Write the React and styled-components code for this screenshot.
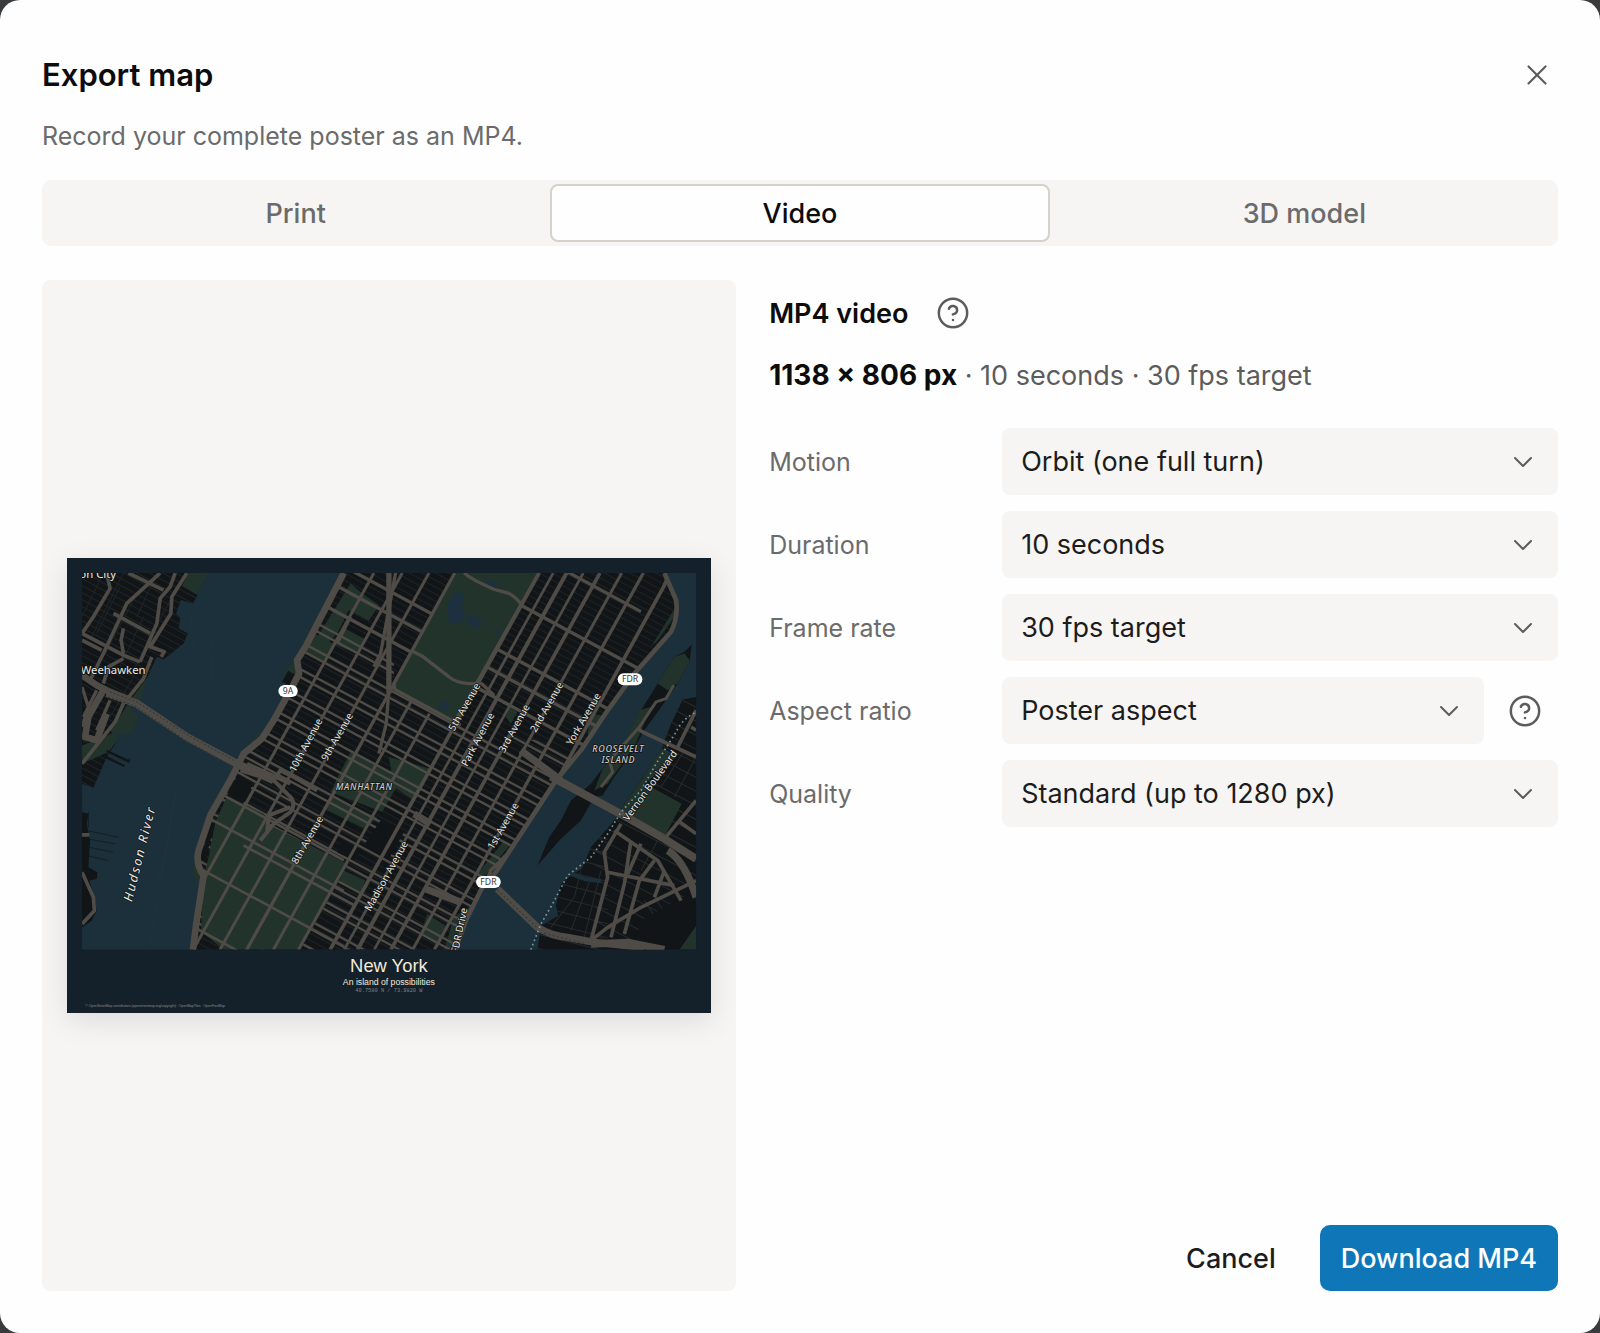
import React from 'react';
import styled, { createGlobalStyle } from 'styled-components';
import { X, ChevronDown, CircleHelp } from 'lucide-react';

const { useState } = React;

const GlobalStyle = createGlobalStyle`
  * { box-sizing: border-box; }
  body {
    margin: 0;
    background: #3a3b3c;
    font-family: Inter, 'Liberation Sans', sans-serif;
    color: #0c0c0c;
  }
  button, select { font: inherit; color: inherit; }
`;

const Dialog = styled.main`
  display: flex;
  flex-direction: column;
  min-height: 100vh;
  padding: 54px 42px 42px;
  border-radius: 20px;
  background: #fefefe;
`;

const Header = styled.header`
  display: flex;
  align-items: center;
  justify-content: space-between;
`;

const Title = styled.h1`
  margin: 0;
  font-size: 31px;
  font-weight: 600;
  line-height: 42px;
`;

const IconButton = styled.button`
  display: flex;
  align-items: center;
  justify-content: center;
  flex: none;
  width: ${(props) => props.$size}px;
  height: ${(props) => props.$size}px;
  padding: 0;
  border: 0;
  background: none;
  color: #5c5c5c;
  cursor: pointer;
`;

const Subtitle = styled.p`
  margin: 21px 0 25px;
  font-size: 25px;
  line-height: 38px;
  color: #6b6b6b;
`;

const Tabs = styled.div`
  display: grid;
  grid-template-columns: repeat(3, 1fr);
  gap: 5px;
  height: 66px;
  padding: 4px;
  border-radius: 9px;
  background: #f6f5f3;
`;

const Tab = styled.button`
  border: 2px solid ${(props) => (props.$active ? '#d3d3cb' : 'transparent')};
  border-radius: 8px;
  background: ${(props) => (props.$active ? '#fefefe' : 'transparent')};
  color: ${(props) => (props.$active ? '#0c0c0c' : '#6b6b6b')};
  font-size: 27px;
  font-weight: 500;
  cursor: pointer;
`;

const Body = styled.div`
  display: grid;
  grid-template-columns: 22fr 25fr;
  gap: 33px;
  flex: 1;
  margin-top: 34px;
`;

const Preview = styled.section`
  display: flex;
  align-items: center;
  padding: 25px;
  border-radius: 8px;
  background: #f6f5f3;
`;

const Poster = styled.svg`
  display: block;
  width: 100%;
  box-shadow: 0 8px 28px rgba(0, 0, 0, 0.1);
`;

const Settings = styled.section`
  display: flex;
  flex-direction: column;
`;

const HeadingRow = styled.div`
  display: flex;
  align-items: center;
  gap: 12px;
`;

const Heading = styled.h2`
  margin: 0;
  font-size: 27px;
  font-weight: 600;
`;

const Summary = styled.p`
  margin: 10px 0 33px;
  font-size: 27px;
  line-height: 38px;
  color: #5c5c5c;

  strong {
    color: #0c0c0c;
    font-size: 28px;
    font-weight: 700;
  }
`;

const Fields = styled.div`
  display: flex;
  flex-direction: column;
  gap: 16px;
`;

const Field = styled.div`
  display: flex;
  align-items: center;
  gap: 8px;
`;

const Label = styled.label`
  flex: none;
  width: 225px;
  font-size: 25px;
  color: #6b6b6b;
`;

const SelectBox = styled.div`
  display: grid;
  flex: 1;
  align-items: center;

  > * { grid-area: 1 / 1; }
  svg {
    justify-self: end;
    margin-right: 19px;
    color: #5c5c5c;
    pointer-events: none;
  }
`;

const Select = styled.select`
  width: 100%;
  height: 67px;
  padding: 0 60px 0 19px;
  border: 0;
  border-radius: 8px;
  background: #f6f5f3;
  color: #1c1c1c;
  font-size: 27px;
  appearance: none;
`;

const Actions = styled.footer`
  display: flex;
  justify-content: flex-end;
  gap: 23px;
  margin-top: auto;
`;

const Action = styled.button`
  height: 66px;
  padding: 0 21px;
  border: 0;
  border-radius: 10px;
  background: ${(props) => (props.$primary ? '#0f77b7' : 'transparent')};
  color: ${(props) => (props.$primary ? '#fff' : '#1c1c1c')};
  font-size: 27px;
  font-weight: 500;
  cursor: pointer;
`;

const fields = [
  { id: 'motion', label: 'Motion', options: ['Orbit (one full turn)', 'Still'] },
  { id: 'duration', label: 'Duration', options: ['10 seconds', '20 seconds'] },
  { id: 'rate', label: 'Frame rate', options: ['30 fps target', '60 fps target'] },
  { id: 'aspect', label: 'Aspect ratio', options: ['Poster aspect', 'Square'], help: true },
  { id: 'quality', label: 'Quality', options: ['Standard (up to 1280 px)', 'High (up to 1920 px)'] },
];

const road = '#4f4b46';
const land = '#111517';
const water = '#1c303b';
const park = '#21332b';

// x of each avenue where it meets the top edge of the map
const avenues = [
  [940, 9, 69], [1025, 9, 69], [1105, 9, 69], [1185, 10, 69], [1265, 9, 450], [1340, 9, 490],
  [1435, 11, 69], [1477, 8, 69], [1517, 12, 69], [1567, 8, 69], [1617, 11, 69], [1682, 9, 69], [1747, 10, 69],
];

// intercepts of the numbered streets, which run in close pairs through midtown
const midtown = [];
for (let d = -196; d < 930; d += 82) {
  midtown.push(d, d + 24);
}
const blocks = [];
for (let d = -1000; d < 1200; d += 21) {
  blocks.push(d);
}
const uptown = [-755, -580, -410, -340, -262];
const westside = [470, 562, 728, 913];

const street = (d, from, to) => `M${from} ${0.54 * from + d}L${to} ${0.54 * to + d}`;

const labels = [
  ['Weehawken', 62, 370, 0, 34, 'start'],
  ['on City', 58, 85, 0, 34, 'start'],
  ['10th Avenue', 737, 585, -62, 30],
  ['9th Avenue', 831, 560, -60, 30],
  ['5th Avenue', 1212, 471, -60, 30],
  ['Park Avenue', 1252, 568, -62, 30],
  ['3rd Avenue', 1361, 535, -61, 30],
  ['2nd Avenue', 1459, 471, -60, 30],
  ['York Avenue', 1569, 507, -60, 30],
  ['8th Avenue', 742, 869, -60, 30],
  ['Madison Avenue', 978, 977, -61, 30],
  ['1st Avenue', 1328, 827, -60, 30],
  ['Vernon Boulevard', 1768, 706, -54, 30],
  ['FDR Drive', 1197, 1140, -78, 30],
];

const shields = [
  ['9A', 683, 422, 58],
  ['FDR', 1707, 387, 74],
  ['FDR', 1283, 994, 74],
];

const manhattan = 'M850 69L800 165 738 285 710 330 716 370 690 420 640 510 605 565 550 610 515 680 450 795 412 900 410 950 425 985 408 1120 395 1197H1190L1215 1110 1240 1060 1262 1015 1305 965 1400 820 1485 690 1560 600 1640 480 1720 370 1820 262 1848 190 1815 69Z';
const jersey = 'M66 69H385L365 108 412 135 398 160 362 150 348 190 360 205 355 235 383 250 370 280 310 328 290 320 262 380 210 450 185 490 150 540 172 570 140 620 100 712 66 700Z';
const queens = 'M1905 440L1865 448 1830 520 1800 600 1740 690 1690 760 1660 810 1590 890 1562 955 1535 970 1500 1000 1485 1065 1492 1095 1440 1125 1430 1197H1905Z';
const island = 'M1892 283L1886 330 1850 400 1815 450 1750 540 1710 610 1660 680 1625 735 1600 740 1560 810 1500 865 1430 945 1465 860 1500 810 1530 750 1590 700 1620 660 1690 580 1740 480 1790 400 1840 320 1870 305Z';
const centralPark = 'M1180 69H1432L1188 505 1170 515 1000 415Z';
const hudsonYards = 'M500 738L610 790 630 825 862 940 838 985 720 1197H490L422 1142 432 970 445 920 465 815Z';

function NewYorkMap() {
  return (
    <Poster viewBox="21 24 1929 1365" role="img" aria-label="Map poster of New York">
      <defs>
        <clipPath id="frame"><path d="M66 69H1905V1197H66Z" /></clipPath>
        <clipPath id="manhattan"><path d={manhattan} /></clipPath>
        <clipPath id="midtown"><path d="M66 69H1000V415L1170 515 1260 540 1700 620V1197H66Z" /></clipPath>
        <clipPath id="jersey"><path d={jersey} /></clipPath>
        <clipPath id="queens"><path d={queens} /></clipPath>
      </defs>
      <path fill="#14212b" d="M21 24H1950V1389H21Z" />
      <g clipPath="url(#frame)" fill="none" strokeLinejoin="round">
        <path fill={water} d="M66 69H1905V1197H66Z" />

        {/* New Jersey shore */}
        <path fill={park} d="M380 69H445L408 135 365 108ZM300 325L262 380 240 450 210 470 235 500 215 550 165 552 130 600 100 560 200 440Z" />
        <path fill={land} d={jersey} />
        <g clipPath="url(#jersey)">
          <path
            stroke="#202527"
            strokeWidth="3"
            d={blocks.map((d) => street(d, 0, 450)).join('')}
          />
          <path stroke="#202527" strokeWidth="3" d="M130 69L66 200M190 69L90 270M230 130L130 320M290 69L230 200M330 150L220 360M250 200L180 350M180 110L110 250M220 380L150 500" />
        </g>
        <path fill={park} d="M66 585L110 570 165 545 172 570 145 605 66 640Z" />
        <path fill={land} d="M140 598L205 628 210 622 208 638 140 606ZM130 612L195 645 192 650 128 620ZM66 785L85 790 80 820 90 870 85 950 112 965 110 985 88 990 105 1050 110 1080 95 1110 66 1130Z" />
        <path stroke={land} strokeWidth="2" d="M80 840L175 860M80 865L165 880M85 890L160 905M80 915L145 930M85 830V785" />
        <path stroke={road} strokeWidth="11" d="M66 250L100 200 150 115 140 69M380 69L335 140 332 190 270 290 312 305 303 320M345 69L330 110 300 145 290 220 240 335M300 69L200 160 130 310 90 390M205 69L310 120M160 190L270 250M66 250L190 315 240 335M66 270L125 300M190 235L183 270 190 310M275 320L250 385 190 460 165 515 66 640M130 400L145 350 190 325" />
        <path stroke={road} strokeWidth="20" d="M66 375L110 405 150 425 200 445M130 420L85 500 75 560 110 570 140 490" />
        <path stroke={road} strokeWidth="10" d="M66 410L85 470 66 530M110 420L70 500M150 450L110 540" />
        <path stroke={road} strokeWidth="11" d="M66 965L100 1040 103 1080 66 1120M66 853H88" />
        <path stroke="#2d3b43" strokeWidth="2" strokeDasharray="3 7" d="M560 130L450 200 455 400M410 610L340 760 270 1180M350 700L320 900 260 1100M390 160L400 300" />

        {/* Manhattan */}
        <path fill={park} d="M840 69L700 330 665 370 700 400ZM600 540L540 610 570 620ZM412 900L395 970 420 1000Z" />
        <path fill={land} d={manhattan} />
        <path fill={land} d="M683 362L718 380 700 410 665 395Z" />
        <g clipPath="url(#manhattan)">
          <path stroke="#1c2022" strokeWidth="4" d={blocks.map((d) => street(d, 350, 1900)).join('')} />
          <path fill={park} d="M870 100L905 130 955 165 925 212 865 180 830 250 780 300 740 310ZM848 232L915 268 885 308 815 280ZM760 250L825 285 795 335 735 310Z" />
          <path fill={park} d="M870 605L1025 680 965 785 810 725ZM985 620L1110 655 1085 705 1060 750 1000 710ZM810 740L950 800 915 835 790 775ZM850 960L915 990 900 1025 835 995ZM1100 1090L1155 1125 1125 1180 1080 1150ZM1590 490L1650 500 1610 570 1580 550ZM1330 870L1350 880 1270 980 1250 970ZM1345 470L1370 485 1350 520 1335 500ZM1180 1100L1240 1060 1190 1197H1150ZM1840 200L1790 270 1770 290 1850 160Z" />
          <g clipPath="url(#midtown)">
            <path stroke={road} strokeWidth="7" d={midtown.map((d) => street(d, 350, 1900)).join('')} />
          </g>
          <path stroke={road} strokeWidth="10" d={uptown.map((d) => street(d, 700, 1740)).join('')} />
          <path fill={land} d="M532 672L580 698 548 760 500 735ZM960 810L1030 845 985 925 910 885ZM840 880L900 905 880 930 830 905Z" />
          <path fill={park} d={hudsonYards} />
          <path fill={land} d="M465 815L440 910 420 930 450 815Z" />
          <g stroke={road}>
            <path strokeWidth="8" d={westside.map((d) => street(d, 350, 850)).join('')} />
            <path strokeWidth="8" d={street(588, 550, 880)} />
            {avenues.map(([x, width, top]) => (
              <path
                key={x}
                strokeWidth={width}
                d={`M${x - 0.555 * (top - 69)} ${top}L${x - 626} 1197`}
              />
            ))}
            <path strokeWidth="11" d="M1825 69L1808 110 1400 850 1290 960 1200 1197" />
          </g>
          <path fill={park} d={centralPark} />
        </g>
        <path fill="#1d303f" d="M1190 120L1212 140 1202 170 1215 205 1190 220 1165 225 1160 160ZM1230 190L1270 220 1240 235 1220 215ZM1270 85L1315 100 1295 115ZM1300 235L1320 240 1312 258ZM1150 450L1165 455 1160 480 1130 475Z" />
        <path
          stroke={road}
          strokeWidth="10"
          d="M1210 69Q1235 90 1300 118L1345 130Q1370 145 1385 168M1050 300L1085 318 1165 380Q1185 398 1225 400H1262L1300 435M1434 69L1188 505M1182 69L1000 400 1003 418 1200 525"
        />
        <path stroke={road} strokeWidth="16" d="M985 69V430" />
        <path stroke={road} strokeWidth="10" d="M985 420L977 520 955 610M1005 69L960 310 940 350M830 280L870 200" />
        <path stroke={road} strokeWidth="20" d="M850 69L800 165 738 285 710 330 716 370 690 420 640 510 605 565 550 610 515 680 450 795 415 900Q405 940 430 975L408 1120 398 1197" />
        <path stroke={road} strokeWidth="14" d="M1810 69L1845 150Q1852 200 1830 245L1720 370 1640 480 1560 600 1485 690 1400 820 1305 965 1262 1015 1240 1060 1215 1110 1185 1197" />
        <path stroke={road} strokeWidth="12" d="M540 660L640 690 680 730Q712 755 690 785L640 820 600 870M560 640L690 700M640 690L660 660 700 680 770 720M690 770L625 795 620 850" />
        <path stroke={road} strokeWidth="22" d="M1380 600L1500 690M1095 1015L1200 1055M1060 790L1110 820" />

        {/* Queens and Roosevelt Island */}
        <path fill={land} d={queens} />
        <g clipPath="url(#queens)">
          <path stroke="#272b2d" strokeWidth="3" d={blocks.map((d) => `M1400 ${d + 820}L1640 ${d + 880}M1600 ${d + 240}L1905 ${d + 400}`).filter((_, i) => i % 2).join('')} />
          <path stroke="#272b2d" strokeWidth="3" d="M1620 960L1570 1160M1590 980L1530 1140M1560 960L1540 1040 1470 1130M1700 900L1690 1000M1790 870L1740 960M1905 620L1840 740M1870 600L1800 710M1750 1050L1790 1110M1780 1040L1820 1100M1810 1110L1870 1190M1870 1080L1830 1140" />
          <path fill={land} d="M1720 1120L1905 1020V1140L1850 1197H1780Z" />
          <path fill={park} d="M1790 588L1850 615 1752 700 1862 760 1812 855 1670 780 1690 740ZM1905 1125L1855 1197H1905Z" />
        </g>
        <path stroke="#1c303b" strokeWidth="12" d="M1530 970L1570 985 1620 992" />
        <path fill={land} d={island} />
        <path fill={park} d="M1870 310L1886 330 1850 400 1820 420 1790 400 1840 320ZM1735 480L1770 470 1720 590 1640 700 1600 720 1625 655 1690 580Z" />
        <path stroke={road} strokeWidth="9" d="M1838 405L1815 445 1785 455 1735 530 1700 570 1645 630 1655 665 1620 710" />
        <path stroke={road} strokeWidth="11" d="M1730 535L1745 545 1905 620M1850 590L1905 480M1890 530L1905 540" />
        <path stroke={road} strokeWidth="24" d="M1470 678L1700 802 1810 865 1905 925" />
        <path stroke={road} strokeWidth="11" d="M1680 820L1630 905 1640 980 1590 1170M1710 870L1690 1000 1650 1160M1740 880L1700 970M1660 840L1790 930 1860 1050M1640 965L1840 1005M1780 930L1735 990 1690 1150M1810 960L1780 1040M1810 865L1905 750M1850 810L1905 850M1590 1170L1640 1130 1740 1070 1905 990" />
        <path stroke={road} strokeWidth="22" d="M1310 1015L1430 1130Q1470 1155 1520 1160L1600 1175 1750 1190M1590 1180L1700 1175 1810 1197M1820 900Q1870 930 1905 1040" />
        <path stroke="#33383a" strokeWidth="3" strokeDasharray="6 7" d="M1310 1018L1430 1133M1450 1148L1570 1178" />
        <path stroke="#7e929b" strokeWidth="5" strokeDasharray="5 9" d="M1900 488Q1860 510 1845 545L1785 640 1740 720 1680 785 1640 850 1590 920 1520 975 1475 1060 1440 1120 1410 1197" />

        {/* Lincoln tunnel */}
        <path stroke={road} strokeWidth="24" d="M140 428L230 460 380 560 530 640 640 690" />
        <path stroke="#2f363a" strokeWidth="3" strokeDasharray="5 7" d="M150 425L230 455 380 552 520 630M145 440L225 467 370 566 510 645" />

        <g
          fill="#ebe9e1"
          stroke="#111517"
          strokeWidth="5"
          paintOrder="stroke"
          fontFamily="'Noto Sans', sans-serif"
          textAnchor="middle"
        >
          {labels.map(([text, x, y, angle, size, anchor]) => (
            <text
              key={text}
              transform={`translate(${x} ${y}) rotate(${angle})`}
              dy={angle ? 9 : 0}
              fontSize={size}
              textAnchor={anchor}
            >
              {text}
            </text>
          ))}
          <text transform="translate(251 912) rotate(-76)" fontSize="38" fontStyle="italic" letterSpacing="6">Hudson River</text>
          <g fontSize="27" fontStyle="italic" fontWeight="500" letterSpacing="2" fill="#c9cac5">
            <text x="911" y="718">MANHATTAN</text>
            <text x="1672" y="606">ROOSEVELT</text>
            <text x="1672" y="637">ISLAND</text>
          </g>
        </g>
        {shields.map(([text, x, y, width]) => (
          <g key={`${text}${x}`}>
            <rect x={x - width / 2} y={y - 18} width={width} height="36" rx="18" fill="#fff" />
            <text x={x} y={y + 9} fontSize="26" fontFamily="'Noto Sans', sans-serif" textAnchor="middle" fill="#333">{text}</text>
          </g>
        ))}
      </g>
      <g textAnchor="middle" fill="#f3ead8" fontFamily="'Liberation Sans', sans-serif">
        <text x="985" y="1263" fontSize="55">New York</text>
        <text x="985" y="1302" fontSize="26">An island of possibilities</text>
        <text x="985" y="1325" fontSize="16" fill="#7d8183" fontFamily="'Liberation Mono', monospace">40.7580 N / 73.9820 W</text>
        <text x="76" y="1370" fontSize="10" fill="#8a8d8e" textAnchor="start">© OpenStreetMap contributors (openstreetmap.org/copyright) · OpenMapTiles · OpenFreeMap</text>
      </g>
    </Poster>
  );
}

export default function App() {
  const [tab, setTab] = useState('Video');

  return (
    <>
      <GlobalStyle />
      <Dialog>
        <Header>
          <Title>Export map</Title>
          <IconButton $size={42} aria-label="Close"><X size={34} strokeWidth={1.5} /></IconButton>
        </Header>
        <Subtitle>Record your complete poster as an MP4.</Subtitle>

        <Tabs role="tablist">
          {['Print', 'Video', '3D model'].map((name) => (
            <Tab
              key={name}
              role="tab"
              aria-selected={tab === name}
              $active={tab === name}
              onClick={() => setTab(name)}
            >
              {name}
            </Tab>
          ))}
        </Tabs>

        <Body>
          <Preview>
            <NewYorkMap />
          </Preview>

          <Settings>
            <HeadingRow>
              <Heading>MP4 video</Heading>
              <IconButton $size={66} aria-label="About MP4 video"><CircleHelp size={34} strokeWidth={1.75} /></IconButton>
            </HeadingRow>
            <Summary><strong>1138 × 806 px</strong> · 10 seconds · 30 fps target</Summary>

            <Fields>
              {fields.map(({ id, label, options, help }) => (
                <Field key={id}>
                  <Label htmlFor={id}>{label}</Label>
                  <SelectBox>
                    <Select id={id}>
                      {options.map((option) => <option key={option}>{option}</option>)}
                    </Select>
                    <ChevronDown size={32} strokeWidth={1.5} />
                  </SelectBox>
                  {help && <IconButton $size={66} aria-label={`About ${label}`}><CircleHelp size={34} strokeWidth={1.75} /></IconButton>}
                </Field>
              ))}
            </Fields>

            <Actions>
              <Action>Cancel</Action>
              <Action $primary>Download MP4</Action>
            </Actions>
          </Settings>
        </Body>
      </Dialog>
    </>
  );
}
